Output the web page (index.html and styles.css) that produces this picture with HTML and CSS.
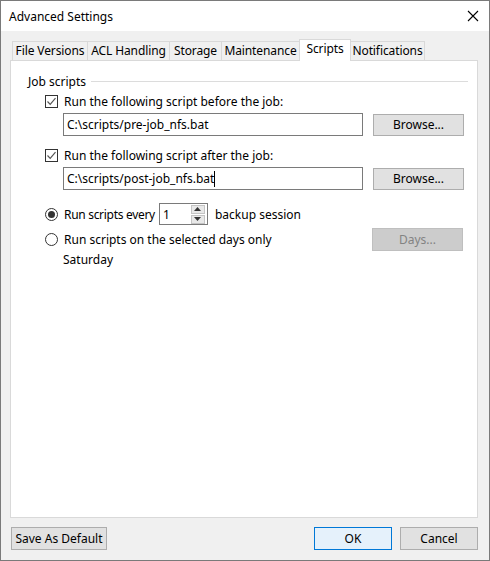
FILE: index.html
```html
<!DOCTYPE html>
<html lang="en">
<head>
    <meta charset="UTF-8">
    <title>Advanced Settings</title>
    <link rel="stylesheet" href="styles.css">
</head>
<body>
    <div class="dialog">
        <div class="titlebar">
            <span class="title">Advanced Settings</span>
            <svg class="close" width="12" height="12" viewBox="0 0 12 12">
                <path d="M1 1 L11 11 M11 1 L1 11" stroke="#000" stroke-width="1.1" fill="none"/>
            </svg>
        </div>

        <div class="content">
            <div class="tabs">
                <div class="tab tab-versions">File Versions</div>
                <div class="tab tab-acl">ACL Handling</div>
                <div class="tab tab-storage">Storage</div>
                <div class="tab tab-maintenance">Maintenance</div>
                <div class="tab tab-scripts active">Scripts</div>
                <div class="tab tab-notifications">Notifications</div>
            </div>

            <div class="panel">
                <div class="group-header">
                    <span>Job scripts</span>
                    <div class="group-line"></div>
                </div>

                <label class="check-row first">
                    <span class="checkbox">
                        <svg width="11" height="11" viewBox="0 0 11 11">
                            <path d="M1.5 5.5 L4.2 8.3 L9.5 2.2" stroke="#555" stroke-width="1.2" fill="none"/>
                        </svg>
                    </span>
                    Run the following script before the job:
                </label>
                <div class="field-row">
                    <div class="textbox">C:\scripts/pre-job_nfs.bat</div>
                    <button class="btn">Browse...</button>
                </div>

                <label class="check-row">
                    <span class="checkbox">
                        <svg width="11" height="11" viewBox="0 0 11 11">
                            <path d="M1.5 5.5 L4.2 8.3 L9.5 2.2" stroke="#555" stroke-width="1.2" fill="none"/>
                        </svg>
                    </span>
                    Run the following script after the job:
                </label>
                <div class="field-row">
                    <div class="textbox">C:\scripts/post-job_nfs.bat<span class="caret"></span></div>
                    <button class="btn">Browse...</button>
                </div>

                <div class="radio-row first">
                    <span class="radio checked"></span>
                    <span class="tight">Run scripts every</span>
                    <div class="spin">
                        <span class="spin-value">1</span>
                        <div class="spin-buttons">
                            <span class="spin-btn">
                                <svg width="7" height="4" viewBox="0 0 7 4"><path d="M0 4 L3.5 0 L7 4 Z" fill="#333"/></svg>
                            </span>
                            <span class="spin-btn">
                                <svg width="7" height="4" viewBox="0 0 7 4"><path d="M0 0 L3.5 4 L7 0 Z" fill="#333"/></svg>
                            </span>
                        </div>
                    </div>
                    <span>backup session</span>
                </div>

                <div class="radio-row days-row">
                    <span class="radio"></span>
                    <span class="grow">Run scripts on the selected days only</span>
                    <button class="btn disabled">Days...</button>
                </div>
                <div class="days-text">Saturday</div>
            </div>

            <div class="footer">
                <button class="btn wide">Save As Default</button>
                <div class="spacer"></div>
                <button class="btn primary">OK</button>
                <button class="btn">Cancel</button>
            </div>
        </div>
    </div>
</body>
</html>
```

FILE: styles.css
```css
* {
    margin: 0;
    padding: 0;
    box-sizing: border-box;
}

body {
    font-family: 'Noto Sans', 'Liberation Sans', sans-serif;
    font-size: 12px;
    color: #000;
    background: #fff;
}

.dialog {
    width: 490px;
    height: 561px;
    border: 1px solid #7a7a7a;
    background: #f0f0f0;
    display: flex;
    flex-direction: column;
}

/* Title bar */
.titlebar {
    height: 30px;
    background: #fff;
    display: flex;
    align-items: center;
    justify-content: space-between;
    padding: 0 10px 0 8px;
}

.title {
    font-size: 12px;
}

.content {
    flex: 1;
    display: flex;
    flex-direction: column;
    padding: 8px 11px 10px 9px;
}

/* Tabs */
.tabs {
    display: flex;
    align-items: flex-end;
    height: 21px;
    padding-left: 2px;
}

.tab {
    height: 19px;
    line-height: 17px;
    text-align: center;
    white-space: nowrap;
    letter-spacing: -0.1px;
    border: 1px solid #d9d9d9;
    border-bottom: none;
    margin-right: -1px;
    background: #f0f0f0;
}

.tab-versions { width: 76px; }
.tab-acl { width: 83px; }
.tab-storage { width: 53px; }
.tab-maintenance { width: 79px; }
.tab-scripts { width: 52px; }
.tab-notifications { width: 75px; }

.tab.active {
    height: 22px;
    line-height: 18px;
    background: #fff;
    position: relative;
    z-index: 1;
    margin-bottom: -1px;
}

/* Panel */
.panel {
    flex: 1;
    background: #fff;
    border: 1px solid #d9d9d9;
    padding: 12px 9px 0 17px;
}

.group-header {
    display: flex;
    align-items: center;
    height: 16px;
    gap: 5px;
}

.group-line {
    flex: 1;
    height: 1px;
    background: #dcdcdc;
}

.check-row {
    display: flex;
    align-items: center;
    gap: 6px;
    height: 16px;
    margin: 11px 0 0 17px;
}

.check-row.first {
    margin-top: 4px;
}

.checkbox {
    width: 13px;
    height: 13px;
    border: 1px solid #333;
    display: flex;
    align-items: center;
    justify-content: center;
}

.field-row {
    display: flex;
    align-items: center;
    gap: 10px;
    margin: 4px 0 0 35px;
}

.textbox {
    width: 300px;
    height: 23px;
    line-height: 21px;
    border: 1px solid #7a7a7a;
    padding-left: 3px;
    background: #fff;
}

.caret {
    display: inline-block;
    width: 1px;
    height: 16px;
    background: #000;
    vertical-align: -4px;
}

.btn {
    font: inherit;
    color: #000;
    width: 91px;
    height: 22px;
    background: #e1e1e1;
    border: 1px solid #adadad;
}

.btn.disabled {
    background: #cccccc;
    border-color: #bfbfbf;
    color: #838383;
}

.btn.primary {
    background: #e5f1fb;
    border-color: #0078d7;
}

/* Radio options */
.radio-row {
    display: flex;
    align-items: center;
    margin: 3px 0 0 17px;
}

.radio-row.first {
    margin-top: 13px;
}

.radio {
    width: 13px;
    height: 13px;
    border: 1px solid #333;
    border-radius: 50%;
    margin-right: 6px;
    display: flex;
    align-items: center;
    justify-content: center;
}

.radio.checked::after {
    content: '';
    width: 7px;
    height: 7px;
    border-radius: 50%;
    background: #333;
}

.tight {
    letter-spacing: -0.3px;
}

.spin {
    display: flex;
    align-items: center;
    justify-content: space-between;
    width: 49px;
    height: 22px;
    border: 1px solid #7a7a7a;
    margin: 0 7px 0 4px;
    padding: 0 2px 0 3px;
}

.spin-buttons {
    display: flex;
    flex-direction: column;
    gap: 1px;
}

.spin-btn {
    width: 14px;
    height: 9px;
    background: #e8e8e8;
    border: 1px solid #c4c4c4;
    display: flex;
    align-items: center;
    justify-content: center;
}

.days-row {
    margin-right: 5px;
}

.days-row .grow {
    flex: 1;
}

.days-row .btn {
    height: 23px;
}

.days-text {
    margin: 0 0 0 35px;
    height: 16px;
}

/* Footer buttons */
.footer {
    display: flex;
    gap: 8px;
    margin-top: 9px;
    padding-left: 1px;
}

.spacer {
    flex: 1;
}

.footer .btn {
    width: 78px;
    height: 23px;
}

.footer .btn.wide {
    width: 96px;
}
```
